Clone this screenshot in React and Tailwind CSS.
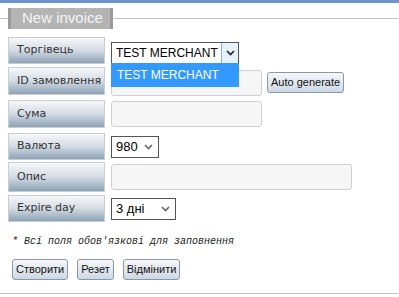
import { useState } from "react";

const labelCls =
  "w-[97px] shrink-0 flex items-center pl-[8px] border border-[#c9ced3] bg-gradient-to-b from-[#f7f8fa] via-[#d3dbe3] to-[#8ea3b7] text-[11px] text-[#333] font-['DejaVu_Sans',sans-serif]";

const inputCls =
  "h-[26px] rounded-[3px] border border-[#cfcfcf] bg-[#f6f6f6]";

function Chevron({ className = "" }) {
  return (
    <svg width="9" height="6" viewBox="0 0 9 6" className={className}>
      <path d="M1 1l3.5 3.5L8 1" fill="none" stroke="currentColor" strokeWidth="1.6" />
    </svg>
  );
}

function Row({ label, h, mt, children }) {
  return (
    <div className="flex items-start gap-[6px]" style={{ marginTop: mt }}>
      <div className={labelCls} style={{ height: h }}>{label}</div>
      <div className="flex items-center gap-[5px]" style={{ height: h }}>
        {children}
      </div>
    </div>
  );
}

function Btn({ children, className = "" }) {
  return (
    <button
      className={`h-[21px] px-[3px] rounded-[3px] border border-[#8a98a8] bg-gradient-to-b from-[#f6f8fb] to-[#cdd8e4] text-[11px] text-[#111] font-['Liberation_Sans',sans-serif] leading-none whitespace-nowrap ${className}`}
    >
      {children}
    </button>
  );
}

export default function App() {
  const [merchant] = useState("TEST MERCHANT");

  return (
    <div className="w-[399px] h-[297px] bg-white overflow-hidden font-['Liberation_Sans',sans-serif]">
      <div className="h-[3px] bg-[#6f93cf]" />

      {/* Tab header */}
      <div className="flex items-center mt-[5px]">
        <div className="w-[8px] h-px bg-[#c4c4c4]" />
        <div className="h-[21px] w-[105px] flex items-center pl-[11px] bg-[#b4b4b4] border-x-[3px] border-[#9a9a9a] text-[15px] text-[#f4f4f4] whitespace-nowrap">
          New invoice
        </div>
        <div className="flex-1 h-px bg-[#c4c4c4]" />
      </div>

      {/* Form */}
      <div className="ml-[8px] mt-[8px]">
        <Row label="Торгівець" h={27} mt={0}>
          <div className="relative mt-[4px]">
            <div className="w-[128px] h-[22px] flex items-center border border-[#555] bg-white">
              <span className="flex-1 pl-[4px] text-[12px] text-black whitespace-nowrap">{merchant}</span>
              <div className="w-[17px] h-full flex items-center justify-center border-l border-[#7eb4ea] bg-[#e5f1fb] text-[#222]">
                <Chevron />
              </div>
            </div>
            <div className="absolute left-0 top-[21px] w-[128px] h-[24px] flex items-center pl-[6px] bg-[#3399ff] text-[12px] text-white whitespace-nowrap z-10">
              {merchant}
            </div>
          </div>
        </Row>

        <Row label="ID замовлення" h={28} mt={3}>
          <div className={`${inputCls} w-[151px] mt-[3px]`} />
          <Btn className="mt-[3px]">Auto generate</Btn>
        </Row>

        <Row label="Сума" h={28} mt={5}>
          <div className={`${inputCls} w-[151px]`} />
        </Row>

        <Row label="Валюта" h={27} mt={5}>
          <div className="w-[48px] h-[22px] flex items-center border border-[#555] bg-white">
            <span className="flex-1 pl-[4px] text-[13px] text-black">980</span>
            <Chevron className="mr-[5px] text-[#666]" />
          </div>
        </Row>

        <Row label="Опис" h={30} mt={2}>
          <div className={`${inputCls} w-[241px]`} />
        </Row>

        <Row label="Expire day" h={27} mt={3}>
          <div className="w-[65px] h-[22px] flex items-center border border-[#555] bg-white">
            <span className="flex-1 pl-[4px] text-[13px] text-black">3 дні</span>
            <Chevron className="mr-[5px] text-[#666]" />
          </div>
        </Row>
      </div>

      <p className="ml-[12px] mt-[15px] text-[10px] italic text-[#222] font-['Liberation_Mono',monospace] leading-none">
        * Всі поля обов'язкові для заповнення
      </p>

      <div className="flex gap-[9px] ml-[12px] mt-[12px]">
        <Btn>Створити</Btn>
        <Btn>Резет</Btn>
        <Btn>Відмінити</Btn>
      </div>

      <div className="mt-[13px] h-px bg-[#c4c4c4]" />
    </div>
  );
}
